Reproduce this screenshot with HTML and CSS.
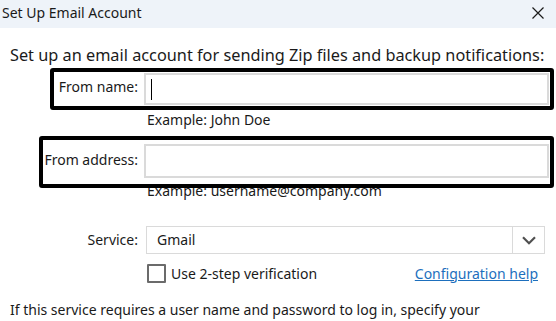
FILE: index.html
```html
<!DOCTYPE html>
<html lang="en">
<head>
  <meta charset="UTF-8" />
  <title>Set Up Email Account</title>
  <link rel="stylesheet" href="styles.css">
</head>
<body>
  <div class="dialog">
    <header class="titlebar">
      <span class="title">Set Up Email Account</span>
      <svg class="close" viewBox="0 0 12 12" width="12" height="12">
        <path d="M0.5 0.5 L11.5 11.5 M11.5 0.5 L0.5 11.5" stroke="#1b1b1b" stroke-width="1.2" fill="none" />
      </svg>
    </header>

    <main class="content">
      <p class="intro">Set up an email account for sending Zip files and backup notifications:</p>

      <div class="form">
        <label class="label label-name">From name:</label>
        <div class="field field-name"><span class="caret"></span></div>
        <div class="example example-name">Example: John Doe</div>

        <label class="label label-address">From address:</label>
        <div class="field field-address"></div>
        <div class="example example-address">Example: username@company.com</div>

        <label class="label label-service">Service:</label>
        <div class="select">
          <span class="select-value">Gmail</span>
          <span class="select-button">
            <svg viewBox="0 0 14 9" width="14" height="9">
              <path d="M1 1.2 L7 7.2 L13 1.2" stroke="#505050" stroke-width="2.2" fill="none" />
            </svg>
          </span>
        </div>

        <div class="check-row">
          <span class="checkbox"></span>
          <span class="check-text">Use 2-step verification</span>
          <a class="help-link" href="#">Configuration help</a>
        </div>
      </div>

      <p class="note">If this service requires a user name and password to log in, specify your</p>
    </main>

    <!-- highlight frames drawn over the screenshot -->
    <div class="mark mark-name"></div>
    <div class="mark mark-address"></div>
  </div>
</body>
</html>
```
FILE: styles.css
```css
:root {
  --text-color: #1a1a1a;
  --titlebar-bg: #eef3f9;
  --field-border: #dadada;
  --link-color: #1d6fbd;
}

body {
  margin: 0;
  background: #fff;
  color: var(--text-color);
  font-family: "Noto Sans", "Open Sans", sans-serif;
  font-size: 14px;
  line-height: 18px;
  overflow: hidden;
}

.dialog {
  position: relative;
  width: 556px;
  height: 321px;
}

.titlebar {
  height: 28px;
  background: var(--titlebar-bg);
  display: flex;
  justify-content: space-between;
  align-items: flex-start;
  box-sizing: border-box;
  padding: 4px 12px 0 2px;
}

.close {
  display: block;
  margin-top: 3px;
}

.content {
  padding-left: 10px;
}

.intro {
  margin: 17px 0 0 0;
  font-size: 16.3px;
  line-height: 20px;
}

.form {
  display: grid;
  grid-template-columns: 128px 405px;
  column-gap: 6px;
}

.label {
  grid-column: 1;
  text-align: right;
  align-self: start;
}

.field,
.select,
.example,
.check-row {
  grid-column: 2;
}

.field {
  box-sizing: border-box;
  border: 2px solid var(--field-border);
  background: #fff;
  display: flex;
  align-items: center;
}

.label-name { margin-top: 8px; padding-top: 5px; }
.field-name { margin-top: 8px; height: 32px; }

.caret {
  display: block;
  width: 1px;
  height: 21px;
  margin-left: 5px;
  background: #000;
}

.example {
  margin-left: 3px;
}

.example-name { margin-top: 6px; }

.label-address { margin-top: 15px; padding-top: 7px; }
.field-address { margin-top: 15px; height: 34px; }

.example-address { margin-top: 4px; }

.label-service { margin-top: 26px; padding-top: 5px; }

.select {
  margin-top: 26px;
  margin-left: 2px;
  width: 399px;
  height: 28px;
  box-sizing: border-box;
  border: 1px solid var(--field-border);
  display: flex;
  align-items: center;
}

.select-value {
  flex: 1;
  padding-left: 10px;
}

.select-button {
  width: 31px;
  height: 100%;
  border-left: 1px solid var(--field-border);
  display: flex;
  align-items: center;
  justify-content: center;
}

.select-button svg {
  display: block;
}

.check-row {
  margin-top: 10px;
  margin-left: 3px;
  display: flex;
  align-items: center;
  height: 19px;
}

.checkbox {
  width: 19px;
  height: 19px;
  box-sizing: border-box;
  border: 2px solid #6b6b6b;
  border-radius: 1px;
  background: #fff;
}

.check-text {
  margin-left: 5px;
}

.help-link {
  margin-left: auto;
  margin-right: 11px;
  color: var(--link-color);
  text-decoration: underline;
}

.note {
  margin: 18px 0 0 0;
}

/* Highlight frames */
.mark {
  position: absolute;
  box-sizing: border-box;
  border: 4px solid #000;
  border-radius: 3px;
}

.mark-name {
  left: 50px;
  top: 68px;
  width: 504px;
  height: 42px;
}

.mark-address {
  left: 39px;
  top: 136px;
  width: 515px;
  height: 52px;
}
```
